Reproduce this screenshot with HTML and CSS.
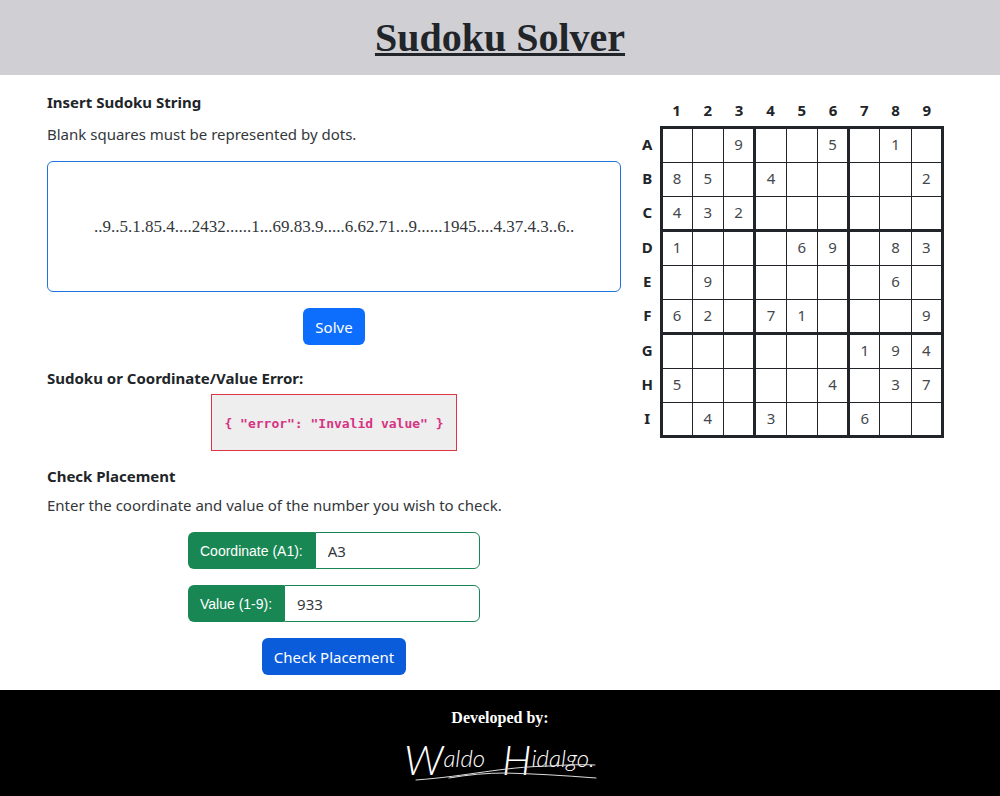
FILE: index.html
```html
<!DOCTYPE html>
<html lang="en">
<head>
<meta charset="utf-8">
<meta name="viewport" content="width=device-width, initial-scale=1">
<title>Sudoku Solver</title>
<link rel="stylesheet" href="styles.css">
</head>
<body>
<header class="site-header"><h1 class="site-title">Sudoku Solver</h1></header>
<main class="content">
  <div class="forms">
    <form class="solve-form">
      <h2 class="heading"><label for="puzzle">Insert Sudoku String</label></h2>
      <p class="hint">Blank squares must be represented by dots.</p>
      <textarea class="puzzle-input" id="puzzle" rows="1" spellcheck="false">..9..5.1.85.4....2432......1...69.83.9.....6.62.71...9......1945....4.37.4.3..6..</textarea>
      <button class="button" type="button">Solve</button>
    </form>
    <section class="errors">
      <h2 class="heading">Sudoku or Coordinate/Value Error:</h2>
      <pre class="error-box"><code>{ "error": "Invalid value" }</code></pre>
    </section>
    <form class="check-form">
      <h2 class="heading">Check Placement</h2>
      <p class="hint">Enter the coordinate and value of the number you wish to check.</p>
      <div class="fields">
        <div class="field"><label class="field-label" for="coordinate">Coordinate (A1):</label><input class="field-input" id="coordinate" type="text" value="A3"></div>
        <div class="field"><label class="field-label" for="value">Value (1-9):</label><input class="field-input" id="value" type="text" value="933"></div>
      </div>
      <button class="button button-active" type="button">Check Placement</button>
    </form>
  </div>
  <table class="board">
    <thead><tr><td></td><th>1</th><th>2</th><th>3</th><th>4</th><th>5</th><th>6</th><th>7</th><th>8</th><th>9</th></tr></thead>
    <tbody>
      <tr><th>A</th><td></td><td></td><td>9</td><td></td><td></td><td>5</td><td></td><td>1</td><td></td></tr>
      <tr><th>B</th><td>8</td><td>5</td><td></td><td>4</td><td></td><td></td><td></td><td></td><td>2</td></tr>
      <tr><th>C</th><td>4</td><td>3</td><td>2</td><td></td><td></td><td></td><td></td><td></td><td></td></tr>
      <tr><th>D</th><td>1</td><td></td><td></td><td></td><td>6</td><td>9</td><td></td><td>8</td><td>3</td></tr>
      <tr><th>E</th><td></td><td>9</td><td></td><td></td><td></td><td></td><td></td><td>6</td><td></td></tr>
      <tr><th>F</th><td>6</td><td>2</td><td></td><td>7</td><td>1</td><td></td><td></td><td></td><td>9</td></tr>
      <tr><th>G</th><td></td><td></td><td></td><td></td><td></td><td></td><td>1</td><td>9</td><td>4</td></tr>
      <tr><th>H</th><td>5</td><td></td><td></td><td></td><td></td><td>4</td><td></td><td>3</td><td>7</td></tr>
      <tr><th>I</th><td></td><td>4</td><td></td><td>3</td><td></td><td></td><td>6</td><td></td><td></td></tr>
    </tbody>
  </table>
</main>
<footer class="site-footer">
  <p class="credit">Developed by:</p>
  <svg class="signature" viewBox="0 0 200 56" role="img" aria-label="Waldo Hidalgo">
    <text class="signature-text" x="4" y="45"><tspan class="signature-initial">W</tspan><tspan dy="-8">aldo</tspan></text>
    <text class="signature-text" x="102" y="45"><tspan class="signature-initial">H</tspan><tspan dy="-8">idalgo.</tspan></text>
    <path class="signature-stroke" d="M16 50C70 46 100 37 150 36Q178 34 195 35"/>
    <path class="signature-stroke" d="M49 48Q78 43 105 43Q145 44 196 48"/>
  </svg>
</footer>
</body>
</html>
```
FILE: styles.css
```css
* { box-sizing: border-box; }

body {
  margin: 0;
  min-height: 100vh;
  display: flex;
  flex-direction: column;
  background: #fff;
  color: #212529;
  font: 15px/24px "Noto Sans", sans-serif;
}

h1, h2, p, pre { margin: 0; }

.site-header {
  padding: 14px 16px 13px;
  background: #d0cfd4;
  text-align: center;
}

.site-title {
  font: bold 40px/48px "Liberation Serif", serif;
  text-decoration: underline;
  text-decoration-thickness: 3px;
}

.content {
  flex: 1;
  display: flex;
  align-items: flex-start;
  gap: 14px;
  padding: 15px 56px 14px 47px;
}

.forms { flex: 1; }

.forms, .solve-form, .errors, .check-form {
  display: flex;
  flex-direction: column;
}

.errors, .check-form { align-items: center; }
.solve-form { align-items: center; margin-bottom: 21px; }
.errors { margin-bottom: 13px; }

.heading {
  align-self: stretch;
  font-size: 15px;
  line-height: 24px;
}

.hint { align-self: stretch; color: #33373b; }
.solve-form .hint { margin: 8px 0 15px; }
.check-form .hint { margin: 5px 0 15px; }

.puzzle-input {
  width: 100%;
  height: 131px;
  margin-bottom: 16px;
  padding: 52px 12px;
  border: 1px solid #1f74e0;
  border-radius: 6px;
  background: #fff;
  color: #33373b;
  font: 17px/26px "Liberation Serif", serif;
  text-align: center;
  resize: none;
  overflow: hidden;
}

.button {
  height: 37px;
  padding: 0 12px;
  border: 0;
  border-radius: 6px;
  background: #0d6efd;
  color: #fff;
  font: 15px/24px "Noto Sans", sans-serif;
}

.button-active { background: #0a5cdb; }

.error-box {
  margin-top: 4px;
  padding: 19px 12px 17px;
  border: 1px solid #dc3545;
  background: #eee;
  color: #d63384;
  font: bold 13px/19px "DejaVu Sans Mono", monospace;
}

.error-box code { font: inherit; }

.fields {
  width: 292px;
  max-width: 100%;
  display: grid;
  grid-template-columns: minmax(0, 1fr);
  gap: 16px;
  margin-bottom: 16px;
}

.field {
  display: flex;
  height: 37px;
}

.field-label {
  padding: 0 12px;
  border-radius: 6px 0 0 6px;
  background: #198754;
  color: #fff;
  font: 14px/38px "Liberation Sans", sans-serif;
}

.field-input {
  flex: 1;
  min-width: 0;
  padding: 0 12px;
  border: 1px solid #198754;
  border-radius: 0 6px 6px 0;
  background: #fff;
  color: #33373b;
  font: 15px/24px "Noto Sans", sans-serif;
}

.board {
  width: 309px;
  margin-top: 5px;
  table-layout: fixed;
  border-collapse: collapse;
  text-align: center;
}

.board td, .board th { height: 34px; padding: 0; }
.board tbody th { padding-bottom: 2px; }
.board thead td { width: 26px; }
.board thead th, .board thead td { height: 32px; }
.board tbody tr:nth-child(3n + 1) td { height: 35px; }
.board tbody td {
  padding-bottom: 2px;
  border: 1px solid #212529;
  color: #44484c;
}
.board tbody tr:nth-child(3n + 1) td { border-top-width: 3px; }
.board tbody tr:last-child td { border-bottom-width: 3px; }
.board tbody td:nth-child(3n + 2) { border-left-width: 3px; }
.board tbody td:last-child { border-right-width: 3px; }

.site-footer {
  display: flex;
  flex-direction: column;
  align-items: center;
  padding: 16px 16px 10px;
  background: #000;
  color: #fff;
}

.credit { font: bold 16px/24px "Liberation Serif", serif; }

.signature {
  width: 200px;
  height: 56px;
  overflow: visible;
}
.signature-text {
  fill: #fff;
  font: italic 300 24px Lato, sans-serif;
}
.signature-initial { font-size: 42px; }
.signature-stroke {
  fill: none;
  stroke: #ddd;
  stroke-width: 1;
  stroke-linecap: round;
}
```
